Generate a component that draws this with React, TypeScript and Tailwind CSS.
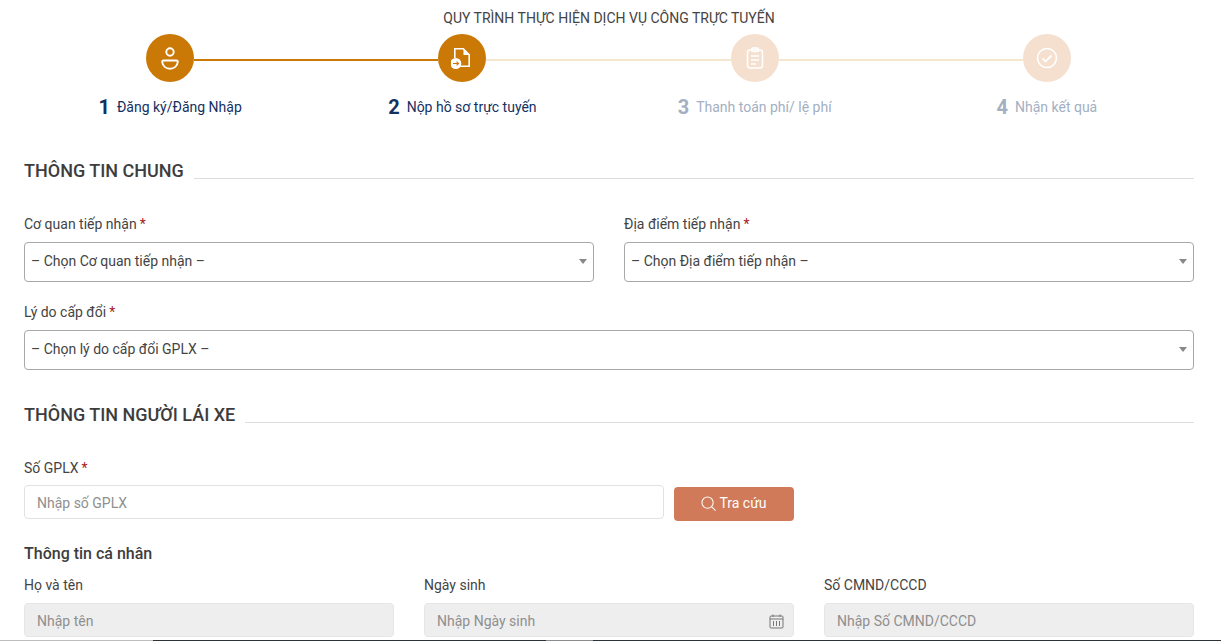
import React from "react";

const font = { fontFamily: "Roboto, sans-serif" };

function UserIcon() {
  return (
    <svg width="20" height="24" viewBox="0 0 20 24" fill="none" stroke="#fff" strokeWidth="1.9">
      <circle cx="10" cy="6" r="3.700" />
      <path d="M3.500 14.500h13c.8 0 1.400.6 1.300 1.400C17.300 20 14 22.800 10 22.800S2.700 20 2.200 15.900C2.100 15.100 2.700 14.500 3.500 14.500z" />
    </svg>
  );
}

function DocIcon() {
  return (
    <svg width="22" height="24" viewBox="0 0 22 24" fill="none">
      <path d="M3.800 12V2.800h8.500l5.900 6V20.200H9" stroke="#fff" strokeWidth="1.600" />
      <path d="M12.500 3v6h6z" fill="#fff" />
      <circle cx="4.800" cy="17.500" r="5.500" fill="#fff" />
      <path d="M2 17.500h5.500M5.600 15.600l1.900 1.900-1.900 1.900" stroke="#ca7806" strokeWidth="1.100" />
    </svg>
  );
}

function ClipIcon() {
  return (
    <svg width="18" height="22" viewBox="0 0 18 22" fill="none" stroke="#fff" strokeWidth="1.500">
      <rect x="1.500" y="3" width="15" height="18" rx="2.500" />
      <rect x="5.500" y="1" width="7" height="3.500" rx="1.500" />
      <path d="M5 9h8M5 13h8M5 17h5" />
    </svg>
  );
}

function CheckIcon() {
  return (
    <svg width="22" height="22" viewBox="0 0 22 22" fill="none" stroke="#fff" strokeWidth="1.600">
      <circle cx="11" cy="11" r="9.500" />
      <path d="M6.500 11.500l3 3 6-6" strokeWidth="1.800" />
    </svg>
  );
}

function Step({ n, label, active, prev, next, icon }: { n: string; label: string; active: boolean; prev?: string; next?: string; icon: React.ReactNode }) {
  return (
    <div className="flex flex-col items-center">
      <div className="flex w-full items-center">
        <div className={`mt-1 h-[2px] flex-1 ${prev ?? ""}`} />
        <div className={`flex h-12 w-12 items-center justify-center rounded-full ${active ? "bg-[#ca7806]" : "bg-[#f5e0cf]"}`}>{icon}</div>
        <div className={`mt-1 h-[2px] flex-1 ${next ?? ""}`} />
      </div>
      <div className="mt-[12px] flex h-[27px] items-center gap-[7px]">
        <span className={`text-[20px] font-bold leading-[27px] ${active ? "text-[#14305f]" : "text-[#a3afc2]"}`}>{n}</span>
        <span className={`text-[14px] leading-[27px] ${active ? "text-[#14305f]" : "text-[#a3afc2]"}`}>{label}</span>
      </div>
    </div>
  );
}

function SectionTitle({ text, className }: { text: string; className: string }) {
  return (
    <div className={`flex h-6 items-center gap-[10px] ${className}`}>
      <h2 className="whitespace-nowrap pt-[2px] text-[18px] font-medium leading-6 text-[#3d3d3d]">{text}</h2>
      <div className="mt-4 h-px flex-1 bg-[#dedede]" />
    </div>
  );
}

function Label({ text, required }: { text: string; required?: boolean }) {
  return (
    <div className="h-[18px] text-[14px] leading-[18px] text-[#444]">
      {text}
      {required && <span className="ml-[3px] text-[#a51c1c]">*</span>}
    </div>
  );
}

function SelectBox({ text }: { text: string }) {
  return (
    <div className="mt-[9px] flex h-10 items-center justify-between rounded border border-[#a8a8a8] bg-white pb-[2px] pl-[6px] pr-[6px] text-[14px] text-[#444]">
      <span>{text}</span>
      <svg width="8" height="5" viewBox="0 0 8 5"><path d="M0 0h8L4 5z" fill="#888" /></svg>
    </div>
  );
}

function DisabledInput({ text, icon }: { text: string; icon?: React.ReactNode }) {
  return (
    <div className="mt-[9px] flex h-[34px] items-center justify-between rounded border border-[#e6e6e6] bg-[#eeeeee] pl-3 pr-[9px] pt-[2px] text-[14px] text-[#8f8f8f]">
      <span>{text}</span>
      {icon}
    </div>
  );
}

export default function App() {
  return (
    <div className="flex h-[641px] w-[1221px] flex-col overflow-hidden bg-white" style={font}>
      <div className="flex-1 pl-6 pr-[27px]">
        <div className="pt-[9px] text-center text-[14px] leading-[18px] text-[#444]">QUY TRÌNH THỰC HIỆN DỊCH VỤ CÔNG TRỰC TUYẾN</div>
        <div className="mr-px mt-[7px] grid grid-cols-4">
          <Step n="1" label="Đăng ký/Đăng Nhập" active next="bg-[#ca7806]" icon={<UserIcon />} />
          <Step n="2" label="Nộp hồ sơ trực tuyến" active prev="bg-[#ca7806]" next="bg-[#f5e6cf]" icon={<DocIcon />} />
          <Step n="3" label="Thanh toán phí/ lệ phí" active={false} prev="bg-[#f5e6cf]" next="bg-[#f5e6cf]" icon={<ClipIcon />} />
          <Step n="4" label="Nhận kết quả" active={false} prev="bg-[#f5e6cf]" icon={<CheckIcon />} />
        </div>

        <SectionTitle text="THÔNG TIN CHUNG" className="mt-[37px]" />

        <div className="mt-[33px] grid grid-cols-2 gap-x-[30px] gap-y-[21px]">
          <div>
            <Label text="Cơ quan tiếp nhận" required />
            <SelectBox text="– Chọn Cơ quan tiếp nhận –" />
          </div>
          <div>
            <Label text="Địa điểm tiếp nhận" required />
            <SelectBox text="– Chọn Địa điểm tiếp nhận –" />
          </div>
          <div className="col-span-2">
            <Label text="Lý do cấp đổi" required />
            <SelectBox text="– Chọn lý do cấp đổi GPLX –" />
          </div>
        </div>

        <SectionTitle text="THÔNG TIN NGƯỜI LÁI XE" className="mt-[32px]" />

        <div className="mt-[33px]">
          <Label text="Số GPLX" required />
          <div className="mt-[8px] flex items-start gap-[10px]">
            <div className="flex h-[34px] w-[640px] items-center rounded border border-[#e2e2e2] bg-white pl-3 pt-[2px] text-[14px] text-[#8f8f8f]">Nhập số GPLX</div>
            <button className="mt-[2px] flex h-[34px] w-[120px] items-center justify-center gap-[3px] rounded bg-[#d17a59] pb-[2px] text-[14px] text-white">
              <svg width="15" height="15" viewBox="0 0 16 16" fill="none" stroke="#fff" strokeWidth="1.100">
                <circle cx="7" cy="7" r="6" />
                <path d="M11.500 11.500L15.500 15.500" />
              </svg>
              Tra cứu
            </button>
          </div>
        </div>

        <h3 className="mt-[23px] h-5 text-[16px] font-medium leading-5 text-[#3d3d3d]">Thông tin cá nhân</h3>

        <div className="mt-[12px] grid grid-cols-3 gap-x-[30px]">
          <div>
            <Label text="Họ và tên" />
            <DisabledInput text="Nhập tên" />
          </div>
          <div>
            <Label text="Ngày sinh" />
            <DisabledInput
              text="Nhập Ngày sinh"
              icon={
                <svg width="15" height="15" viewBox="0 0 15 15" fill="none" stroke="#777" strokeWidth="1">
                  <rect x="1" y="2" width="13" height="12" rx="1" />
                  <path d="M1 5h13M4 .500v2.500M11 .500v2.500M4.500 7v5M7.500 7v5M10.500 7v5" />
                </svg>
              }
            />
          </div>
          <div>
            <Label text="Số CMND/CCCD" />
            <DisabledInput text="Nhập Số CMND/CCCD" />
          </div>
        </div>
      </div>
      <div className="flex h-px shrink-0">
        <div className="w-[153px] bg-[#bdbdbd]" />
        <div className="w-[393px] bg-[#2b3238]" />
        <div className="w-[47px] bg-[#8a8d90]" />
        <div className="flex-1 bg-[#2b3238]" />
      </div>
    </div>
  );
}
